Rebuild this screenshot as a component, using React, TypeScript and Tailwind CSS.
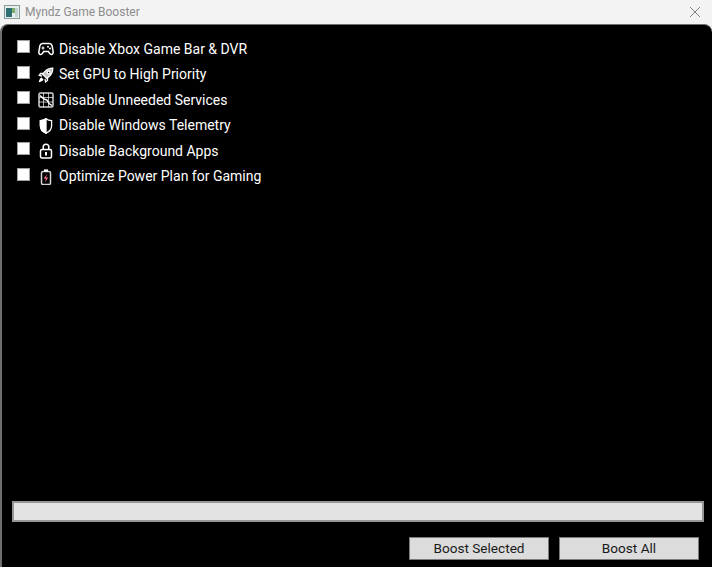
import type { ReactNode } from "react";

const GamepadIcon = () => (
  <svg width="16" height="14" viewBox="0 0 16 14" fill="none" stroke="white" strokeWidth="1.5">
    <path d="M4.500 1.500h7c1.400 0 2.200.8 2.600 2.200l1 5.600c.3 1.800-.5 3.200-1.700 3.200-1 0-1.600-.7-2.200-1.700l-.8-1.300H5.600l-.8 1.300c-.6 1-1.200 1.700-2.200 1.700-1.200 0-2-1.400-1.700-3.200l1-5.600c.4-1.400 1.200-2.200 2.600-2.200z" />
    <path d="M3.500 6h3M5 4.500v3" strokeWidth="1.200" />
    <circle cx="10" cy="4.800" r="1" fill="white" stroke="none" />
    <circle cx="12" cy="6.600" r="1" fill="white" stroke="none" />
  </svg>
);

const RocketIcon = () => (
  <svg width="16" height="16" viewBox="0 0 16 16" fill="none" stroke="white" strokeWidth="1.300">
    <path d="M14.800 1.200c-3.400.1-6 1.200-8 3.400L4.600 7.200l4.200 4.200 2.600-2.200c2.200-2 3.300-4.600 3.400-8z" fill="white" fillOpacity=".75" />
    <path d="M5 6.500H2.600L1.200 8.400l2.800.6M9.500 11v2.400l-1.900 1.400-.6-2.800" />
    <path d="M4 11c-1.200.3-2 1.400-2.400 3.400 2-.4 3.100-1.200 3.400-2.400" fill="white" />
    <circle cx="10.600" cy="5.400" r="1.400" fill="black" />
  </svg>
);

const MapIcon = () => (
  <svg width="16" height="16" viewBox="0 0 16 16" fill="none" stroke="white">
    <rect x="1" y="1" width="14" height="14" rx="1.500" strokeWidth="1.500" stroke="#d4d4d4" />
    <path d="M1 5.500h14M1 10h14M5.500 1v14M10.500 1v14" strokeWidth=".9" strokeOpacity=".75" />
    <path d="M2 3.500l4 3.500 3 1 2 3.500 3 2" strokeWidth="1.500" />
  </svg>
);

const ShieldIcon = () => (
  <svg width="14" height="16" viewBox="0 0 14 16" fill="none" stroke="white" strokeWidth="1.300">
    <path d="M7 .8c1.600 1.200 3.400 1.800 5.600 1.900v5.100c0 3.400-2.200 6-5.600 7.400C3.600 13.800 1.400 11.200 1.400 7.800V2.700C3.600 2.600 5.400 2 7 .8z" />
    <path d="M7 .8c-1.600 1.200-3.400 1.800-5.600 1.900v5.100c0 3.400 2.200 6 5.600 7.400z" fill="white" />
  </svg>
);

const LockIcon = () => (
  <svg width="14" height="16" viewBox="0 0 14 16" fill="none" stroke="white" strokeWidth="1.500">
    <rect x="1.500" y="6.500" width="11" height="8.500" rx="1.500" />
    <path d="M4.200 6.500V4a2.800 2.800 0 0 1 5.600 0v2.500" />
    <rect x="6" y="9" width="2" height="3.500" fill="white" stroke="none" />
  </svg>
);

const BatteryIcon = () => (
  <svg width="12" height="16" viewBox="0 0 12 16" fill="none" stroke="white" strokeWidth="1.500">
    <rect x="1.500" y="2.500" width="9" height="13" rx="1.500" stroke="#d4d4d4" />
    <path d="M4 .4h4v2.200H4z" fill="white" stroke="none" />
    <path d="M7 5L3.800 9.800h2.200L5 13.500 8.200 8.500H6z" fill="#fb7185" stroke="none" />
  </svg>
);

const options: { label: string; icon: ReactNode }[] = [
  { label: "Disable Xbox Game Bar & DVR", icon: <GamepadIcon /> },
  { label: "Set GPU to High Priority", icon: <RocketIcon /> },
  { label: "Disable Unneeded Services", icon: <MapIcon /> },
  { label: "Disable Windows Telemetry", icon: <ShieldIcon /> },
  { label: "Disable Background Apps", icon: <LockIcon /> },
  { label: "Optimize Power Plan for Gaming", icon: <BatteryIcon /> },
];

export default function App() {
  return (
    <div className="flex h-[567px] w-[712px] flex-col overflow-hidden bg-[#f3f3f3] font-['Roboto',sans-serif]">
      {/* Title bar */}
      <div className="flex h-6 shrink-0 items-center pl-1 pr-[11px]">
        <svg width="16" height="14" viewBox="0 0 16 14" className="mr-[5px]">
          <rect x="0.500" y="0.500" width="15" height="13" fill="#e8eeee" stroke="#8a9a9a" />
          <rect x="2" y="3" width="6" height="9" fill="#2f6f73" />
          <rect x="8" y="3" width="3" height="5" fill="#7fb069" />
          <rect x="11" y="3" width="3" height="9" fill="#c4d4d6" />
        </svg>
        <span className="text-xs text-[#8c8c8c]">Myndz Game Booster</span>
        <svg width="12" height="12" viewBox="0 0 12 12" className="ml-auto" stroke="#7f7f7f" strokeWidth="1">
          <path d="M1 1l10 10M11 1L1 11" />
        </svg>
      </div>

      {/* Client area */}
      <div className="flex min-h-0 flex-1 flex-col rounded-t-lg border-l-2 border-t border-[#6e6e6e] bg-black pb-[7px] pl-[10px] pr-2 pt-[15px]">
        <div className="flex flex-col gap-[7.6px] pl-[5px]">
          {options.map((option) => (
            <label key={option.label} className="flex h-[18px] items-center text-white">
              <span className="h-[13px] w-[13px] self-start border border-[#a0a0a0] bg-white" />
              <span className="ml-[6px] flex w-[20px] items-center justify-center">{option.icon}</span>
              <span className="ml-[3px] pb-px text-sm leading-none">{option.label}</span>
            </label>
          ))}
        </div>

        <div className="mt-auto h-[21px] border-2 border-[#969696] bg-[#e3e3e3]" />

        <div className="mt-[15px] flex justify-end gap-[10px] pr-[5px]">
          <button className="h-[23px] w-[140px] border border-[#7a7a7a] bg-[#dcdcdc] text-[13.6px] leading-none text-[#1a1a1a]">
            Boost Selected
          </button>
          <button className="h-[23px] w-[140px] border border-[#7a7a7a] bg-[#dcdcdc] text-[13.6px] leading-none text-[#1a1a1a]">
            Boost All
          </button>
        </div>
      </div>
    </div>
  );
}
